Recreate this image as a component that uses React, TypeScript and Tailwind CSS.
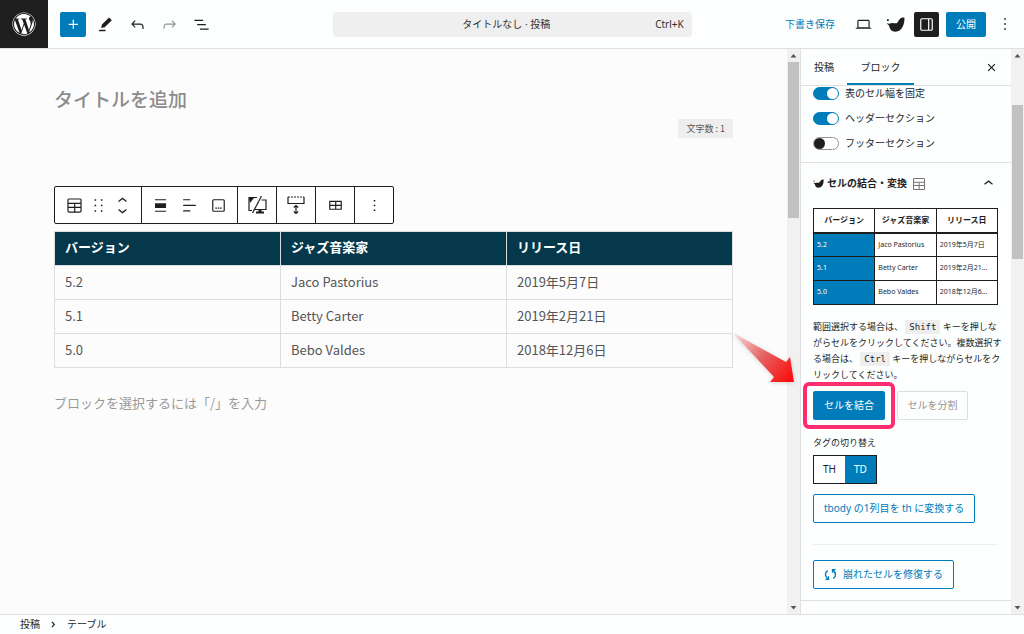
import { useState } from "react";
import type { ReactNode } from "react";
import { FaWordpress } from "react-icons/fa";

const ICONS = {
  plus: "M11 12.5V17.5H12.5V12.5H17.5V11H12.5V6H11V11H6V12.5H11Z",
  edit: "m20 6.500-3.500-3.500-9 9-1 4.500 4.500-1L20 6.500Zm-8 12H4V20.500h8v-2Z",
  undo: "M18.3 11.7c-.6-.6-1.4-.9-2.3-.9H6.7l2.9-3.3-1.1-1-4.5 5L8.5 16l1-1-2.7-2.7H16c.5 0 .9.2 1.3.5 1 1 1 3.4 1 4.5v.3h1.5v-.2c0-1.5 0-4.3-1.5-5.7z",
  redo: "M15.6 6.5l-1.1 1 2.9 3.3H8c-.9 0-1.7.3-2.3.9-1.4 1.5-1.4 4.2-1.4 5.6v.2h1.5v-.3c0-1.1 0-3.5 1-4.5.3-.3.7-.5 1.3-.5h9.2L14.5 15l1.1 1.1 4.6-4.6-4.6-5z",
  listView: "M3 6h11v1.5H3V6Zm3.5 5.5h11V13h-11v-1.5ZM21 17H10v1.5h11V17Z",
  desktop: "M20.5 16h-.7V8c0-1.1-.9-2-2-2H6.2c-1.1 0-2 .9-2 2v8h-.7c-.8 0-1.5.7-1.5 1.5h20c0-.8-.7-1.5-1.5-1.5zM5.7 8c0-.3.2-.5.5-.5h11.6c.3 0 .5.2.5.5v7.6H5.7V8z",
  drawer: "M18 4H6c-1.1 0-2 .9-2 2v12c0 1.1.9 2 2 2h12c1.1 0 2-.9 2-2V6c0-1.1-.9-2-2-2zm-4 14.5H6c-.3 0-.5-.2-.5-.5V6c0-.3.2-.5.5-.5h8v13zm4.5-.5c0 .3-.2.5-.5.5h-2.5v-13H18c.3 0 .5.2.5.5v12z",
  more: "M13 19h-2v-2h2v2zm0-6h-2v-2h2v2zm0-6h-2V5h2v2z",
  close: "M12 13.06l3.712 3.713 1.061-1.06L13.061 12l3.712-3.712-1.06-1.06L12 10.938 8.288 7.227l-1.061 1.06L10.939 12l-3.712 3.712 1.06 1.061L12 13.061z",
  blockTable: "M19 3H5c-1.1 0-2 .9-2 2v14c0 1.1.9 2 2 2h14c1.1 0 2-.9 2-2V5c0-1.1-.9-2-2-2zM5 4.5h14c.3 0 .5.2.5.5v3.5h-15V5c0-.3.2-.5.5-.5zm8 5.5h6.5v3.5H13V10zm-1.5 3.5h-7V10h7v3.5zm-7 5.5v-4h7v4.5H5c-.3 0-.5-.2-.5-.5zm14.5.5h-6V15h6.5v4c0 .3-.2.5-.5.5z",
  drag: "M7 6h2V4H7v2zm0 7h2v-2H7v2zm0 7h2v-2H7v2zm8-16v2h2V4h-2zm0 9h2v-2h-2v2zm0 7h2v-2h-2v2z",
  chevronUp: "M6.5 12.4L12 8l5.5 4.4-.9 1.2L12 10l-4.5 3.6-1-1.2z",
  movers: "M6.5 6.4L12 2l5.5 4.4-.9 1.2L12 4l-4.5 3.6-1-1.2zM17.5 17.6L12 22l-5.5-4.4.9-1.2L12 20l4.5-3.6 1 1.2z",
  alignNone: "M19 5.5H5V4h14v1.5ZM19 20H5v-1.5h14V20ZM5 9h14v6H5V9Z",
  alignLeft: "M13 5.5H4V4h9v1.5Zm7 7H4V11h16v1.5Zm-7 7H4V18h9v1.5Z",
  caption: "M6 5.5h12a.5.5 0 0 1 .5.5v12a.5.5 0 0 1-.5.5H6a.5.5 0 0 1-.5-.5V6a.5.5 0 0 1 .5-.5ZM4 6a2 2 0 0 1 2-2h12a2 2 0 0 1 2 2v12a2 2 0 0 1-2 2H6a2 2 0 0 1-2-2V6Zm4 10h2v-1.5H8V16Zm5 0h-2v-1.5h2V16Zm1 0h2v-1.5h-2V16Z",
  table: "M4 6v11.5h16V6H4zm1.5 1.5h6V11h-6V7.5zm0 8.5v-3.5h6V16h-6zm13 0H13v-3.5h5.5V16zM13 11V7.5h5.5V11H13z",
  chevronRight: "M9.5 5.5 7.500 7l4.600 5-4.600 5 2 1.500 6-6.5z",
  bird: "M1.200 5.500h2.300v2H1.200zM.8 10.500 4.500 11c2.500-1.500 5-.5 7.500-.5 3 0 3.500-3.500 5.500-5.500 1.500-1.500 3.500-2 5.800-1.800.400 9-3.300 17.800-11.300 17.800-5 0-7.500-3.500-8-7.500z",
};

function Icon({ name, className = "size-[19px]" }: { name: keyof typeof ICONS; className?: string }) {
  return (
    <svg viewBox="0 0 24 24" fill="currentColor" fillRule="evenodd" className={`shrink-0 ${className}`} aria-hidden="true">
      <path d={ICONS[name]} />
    </svg>
  );
}

function IconButton({ label, className = "w-8", children }: { label: string; className?: string; children: ReactNode }) {
  return (
    <button aria-label={label} className={`flex h-[25px] shrink-0 items-center justify-center ${className}`}>
      {children}
    </button>
  );
}

function TopBar() {
  return (
    <header className="flex h-[49px] shrink-0 items-center border-b border-[#e0e0e0] bg-[#fdffff]">
      <div className="flex flex-1 items-center">
        <a href="#" aria-label="WordPress" className="flex size-12 items-center justify-center bg-[#1e1e1e] text-white">
          <FaWordpress className="size-6" />
        </a>
        <IconButton label="ブロック挿入ツール" className="ml-3 w-[26px] rounded-xs bg-[#007cba] text-white">
          <Icon name="plus" />
        </IconButton>
        <div className="ml-[3px] flex">
          <IconButton label="ツール"><Icon name="edit" /></IconButton>
          <IconButton label="元に戻す"><Icon name="undo" /></IconButton>
          <IconButton label="やり直す" className="w-8 text-[#949494]"><Icon name="redo" /></IconButton>
          <IconButton label="リスト表示"><Icon name="listView" /></IconButton>
        </div>
      </div>
      <button className="ml-1 flex h-[25px] w-[35%] items-center rounded-sm bg-[#efefef] pr-2 pl-6 text-[#2f2f2f]">
        <span className="flex-1 text-center">タイトルなし · 投稿</span>
        <span>Ctrl+K</span>
      </button>
      <div className="flex flex-1 items-center justify-end pr-[3px]">
        <button className="mr-3 text-[#007cba]">下書き保存</button>
        <IconButton label="表示"><Icon name="desktop" /></IconButton>
        <IconButton label="Flexible Table Block"><Icon name="bird" /></IconButton>
        <IconButton label="設定" className="ml-[3px] w-[25px] rounded-xs bg-[#1e1e1e] text-white">
          <Icon name="drawer" />
        </IconButton>
        <button className="mr-[3px] ml-[7px] h-[25px] w-10 rounded-xs bg-[#007cba] text-white">公開</button>
        <IconButton label="オプション"><Icon name="more" className="size-5" /></IconButton>
      </div>
    </header>
  );
}

function Scrollbar({ thumb, track }: { thumb: string; track: string }) {
  return (
    <div className="flex w-[13px] shrink-0 flex-col items-center bg-[#f1f1f1]" aria-hidden="true">
      <svg viewBox="0 0 13 13" className="size-[13px] shrink-0 text-[#555]">
        <path d="M3.500 8.500 6.500 5l3 3.500z" fill="currentColor" />
      </svg>
      <div className={`flex w-[11px] flex-1 flex-col ${track}`}>
        <div className={`bg-[#c1c1c1] ${thumb}`} />
      </div>
      <svg viewBox="0 0 13 13" className="size-[13px] shrink-0 text-[#555]">
        <path d="M3.500 5 6.500 8.500l3-3.500z" fill="currentColor" />
      </svg>
    </div>
  );
}

function BlockToolbar() {
  return (
    <div role="toolbar" aria-label="ブロックツール" className="mt-12 flex h-[38px] w-fit items-center divide-x divide-[#1e1e1e] rounded-xs border border-[#1e1e1e] bg-white text-[#1e1e1e]">
      <div className="flex h-full items-center px-[7px]">
        <IconButton label="テーブル" className="w-6"><Icon name="blockTable" /></IconButton>
        <IconButton label="ドラッグ" className="w-6"><Icon name="drag" /></IconButton>
        <IconButton label="移動" className="w-6"><Icon name="movers" /></IconButton>
      </div>
      <div className="flex h-full items-center px-1">
        <IconButton label="配置" className="w-[29px]"><Icon name="alignNone" /></IconButton>
        <IconButton label="テキスト左寄せ" className="w-[29px]"><Icon name="alignLeft" /></IconButton>
        <IconButton label="キャプション" className="w-[29px]"><Icon name="caption" /></IconButton>
      </div>
      <div className="flex h-full items-center">
        <IconButton label="表示切り替え" className="w-[38px]">
          <svg viewBox="0 0 20 20" className="size-5" fill="none" stroke="currentColor" strokeWidth="1.200">
            <path d="M10 2.500H2v13h3M14.500 5h4.500v9.500H8" />
            <path d="M2 3h5L3 8z" fill="currentColor" stroke="none" />
            <path d="M9 17.500h8M11.500 15.500h3" strokeWidth="2" />
            <path d="M14.500 1 5.500 18" />
          </svg>
        </IconButton>
      </div>
      <div className="flex h-full items-center">
        <IconButton label="余白" className="w-[38px]">
          <svg viewBox="0 0 20 20" className="size-5" fill="none" stroke="currentColor" strokeWidth="1.200">
            <path d="M2 2h16" strokeDasharray="2 1" />
            <path d="M2 2v6.500h16V2M10 10.500v8M7.800 12.500l2.200-2 2.200 2M7.800 16.500l2.200 2 2.200-2" />
          </svg>
        </IconButton>
      </div>
      <div className="flex h-full items-center">
        <IconButton label="表を編集" className="w-[38px]"><Icon name="table" /></IconButton>
      </div>
      <div className="flex h-full items-center">
        <IconButton label="オプション" className="w-[38px]"><Icon name="more" /></IconButton>
      </div>
    </div>
  );
}

const HEAD = ["バージョン", "ジャズ音楽家", "リリース日"];
const ROWS = [
  ["5.2", "Jaco Pastorius", "2019年5月7日"],
  ["5.1", "Betty Carter", "2019年2月21日"],
  ["5.0", "Bebo Valdes", "2018年12月6日"],
];

function Editor() {
  return (
    <main className="min-w-0 flex-1 overflow-hidden bg-[#fcfcfc] px-[54px] pt-9 font-['Noto_Sans_CJK_JP',sans-serif] text-[13px] text-[#555]">
      <input
        aria-label="タイトルを追加"
        placeholder="タイトルを追加"
        className="block h-7 w-full text-[19px] font-medium outline-none placeholder:text-[#8c8c8c]"
      />
      <p className="mt-[6px] ml-auto flex h-[19px] w-fit items-center bg-[#eee] px-2 text-[9px]">文字数 : 1</p>
      <BlockToolbar />
      <table className="mt-[7px] w-full table-fixed border-collapse text-left">
        <thead>
          <tr className="h-[34px] bg-[#05384b] text-white">
            {HEAD.map((h) => (
              <th key={h} scope="col" className="border border-[#dcdcdc] px-[10px] pt-0 pb-[3px] font-bold">{h}</th>
            ))}
          </tr>
        </thead>
        <tbody>
          {ROWS.map((row) => (
            <tr key={row[0]} className="h-[34px]">
              {row.map((cell) => (
                <td key={cell} className="border border-[#dcdcdc] px-[10px] pt-0 pb-[2px]">{cell}</td>
              ))}
            </tr>
          ))}
        </tbody>
      </table>
      <input
        aria-label="ブロックを追加"
        placeholder="ブロックを選択するには「/」を入力"
        className="mt-6 block h-5 w-full outline-none placeholder:text-[#999]"
      />
    </main>
  );
}

function Toggle({ label, on = false }: { label: string; on?: boolean }) {
  return (
    <label className="flex h-[13px] items-center gap-[6px]">
      <input
        type="checkbox"
        role="switch"
        defaultChecked={on}
        className="h-[13px] w-[26px] appearance-none rounded-full border border-[#949494] bg-white before:block before:size-[11px] before:rounded-full before:bg-[#1e1e1e] checked:border-[#007cba] checked:bg-[#007cba] checked:before:translate-x-[13px] checked:before:bg-white"
      />
      {label}
    </label>
  );
}

function Kbd({ children }: { children: ReactNode }) {
  return <kbd className="bg-[#eee] px-1 py-[2px] font-['DejaVu_Sans_Mono',monospace] text-[9px]">{children}</kbd>;
}

const PREVIEW = [
  ["5.2", "Jaco Pastorius", "2019年5月7日"],
  ["5.1", "Betty Carter", "2019年2月21..."],
  ["5.0", "Bebo Valdes", "2018年12月6..."],
];

function PreviewTable() {
  return (
    <table className="w-full table-fixed border-collapse bg-white text-[7px]">
      <thead>
        <tr className="h-6 border-b-2 border-[#1e1e1e] text-[8px]">
          {HEAD.map((h) => (
            <th key={h} scope="col" className="border-x border-t border-[#1e1e1e] p-0 font-bold whitespace-nowrap">{h}</th>
          ))}
        </tr>
      </thead>
      <tbody>
        {PREVIEW.map((row) => (
          <tr key={row[0]} className="h-6">
            {row.map((cell, i) => (
              <td
                key={cell}
                className={`border-x border-b border-[#1e1e1e] py-0 pr-0 pl-[3px] whitespace-nowrap ${i === 0 ? "bg-[#007cba] text-white" : ""}`}
              >
                {cell}
              </td>
            ))}
          </tr>
        ))}
      </tbody>
    </table>
  );
}

function Sidebar() {
  const [tag, setTag] = useState("TD");

  return (
    <aside className="flex w-[211px] shrink-0 flex-col overflow-hidden border-l border-[#e0e0e0] bg-[#fdffff]">
      <div className="flex h-[37px] shrink-0 items-stretch border-b border-[#e0e0e0]">
        <button className="w-[46px]">投稿</button>
        <button className="w-[67px] border-b-2 border-[#007cba] pt-[2px]">ブロック</button>
        <button aria-label="閉じる" className="ml-auto flex w-10 items-center justify-center">
          <Icon name="close" />
        </button>
      </div>

      <div className="flex flex-col gap-3 border-b border-[#e0e0e0] pt-px pr-[13px] pb-3 pl-3">
        <Toggle label="表のセル幅を固定" on />
        <Toggle label="ヘッダーセクション" on />
        <Toggle label="フッターセクション" />
      </div>

      <section className="border-b border-[#e0e0e0] pr-[13px] pb-[11px] pl-3">
        <button aria-expanded="true" className="flex h-[45px] w-full items-center pb-1 font-bold">
          <Icon name="bird" className="size-[11px]" />
          <span className="ml-[3px] whitespace-nowrap">セルの結合・変換</span>
          <Icon name="blockTable" className="ml-1 size-4 text-[#757575]" />
          <Icon name="chevronUp" className="ml-auto size-[19px]" />
        </button>
        <PreviewTable />
        <p className="mt-[14px] text-[9px] leading-4 whitespace-nowrap">
          範囲選択する場合は、 <Kbd>Shift</Kbd> キーを押しな
          <br />
          がらセルをクリックしてください。複数選択す
          <br />
          る場合は、 <Kbd>Ctrl</Kbd> キーを押しながらセルをク
          <br />
          リックしてください。
        </p>
        <div className="mt-2 flex gap-3">
          <div className="relative">
            <button className="h-[29px] w-[72px] rounded-xs bg-[#007cba] text-white">セルを結合</button>
            <span className="pointer-events-none absolute -inset-x-[10px] -inset-y-[9px] rounded-md border-4 border-[#ff2d6f]" />
          </div>
          <button disabled className="h-[29px] w-[71px] rounded-xs border border-[#ddd] text-[#949494]">セルを分割</button>
        </div>
        <p className="mt-[15px] text-[9px] leading-4">タグの切り替え</p>
        <div className="mt-1 flex w-fit border border-[#1e1e1e]">
          {["TH", "TD"].map((t) => (
            <button
              key={t}
              aria-pressed={tag === t}
              onClick={() => setTag(t)}
              className={`h-[27px] w-[31px] ${tag === t ? "bg-[#007cba] text-white" : "bg-white"}`}
            >
              {t}
            </button>
          ))}
        </div>
        <button className="mt-[10px] block h-[29px] rounded-xs border border-[#007cba] px-[10px] text-[#007cba]">
          tbody の1列目を th に変換する
        </button>
        <hr className="mt-[21px] border-[#eee]" />
        <button className="mt-[15px] flex h-[29px] items-center gap-[6px] rounded-xs border border-[#007cba] px-[10px] text-[#007cba]">
          <svg viewBox="0 0 14 14" className="size-[13px]" fill="none" stroke="currentColor" strokeWidth="1.500">
            <path d="M4 2.800C.5 5 .8 9 4.500 12M10 11.200C13.500 9 13.200 5 9.500 2" />
            <path d="M4.800 9v3.300H1.500M9.200 5V1.700h3.300" />
          </svg>
          崩れたセルを修復する
        </button>
      </section>
    </aside>
  );
}

function Arrow() {
  return (
    <svg viewBox="0 0 72 60" className="pointer-events-none absolute top-[282px] right-[222px] h-[60px] w-[72px] drop-shadow-sm" aria-hidden="true">
      <defs>
        <linearGradient id="arrow" x1="5" y1="3" x2="60" y2="50" gradientUnits="userSpaceOnUse">
          <stop offset="0" stopColor="#fbd5d5" />
          <stop offset="0.500" stopColor="#e56060" />
          <stop offset="1" stopColor="#fb0d0d" />
        </linearGradient>
      </defs>
      <path d="M3 2 56 31l4-5 4 25H40l4-5z" fill="url(#arrow)" />
    </svg>
  );
}

export default function App() {
  return (
    <div className="flex h-screen flex-col overflow-hidden bg-[#fdffff] font-['Noto_Sans','Noto_Sans_CJK_JP',sans-serif] text-[10px] text-[#1e1e1e]">
      <TopBar />
      <div className="relative flex min-h-0 flex-1">
        <Editor />
        <Scrollbar track="" thumb="h-[29%]" />
        <Sidebar />
        <Scrollbar track="pt-[43px]" thumb="h-[31%]" />
        <Arrow />
      </div>
      <footer className="flex h-5 shrink-0 items-center border-t border-[#e0e0e0] px-5">
        <nav aria-label="パンくずリスト" className="flex items-center gap-2">
          <a href="#">投稿</a>
          <Icon name="chevronRight" className="size-[11px]" />
          <a href="#">テーブル</a>
        </nav>
      </footer>
    </div>
  );
}
